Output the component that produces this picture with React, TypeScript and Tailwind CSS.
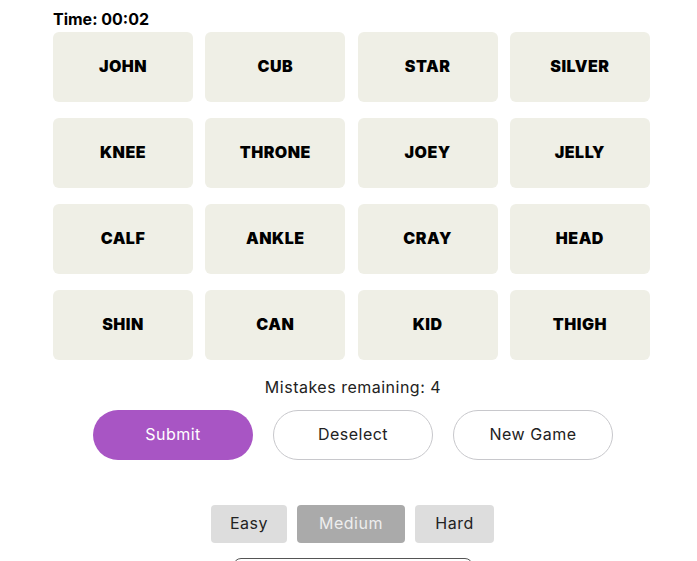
import React from "react";

const words = [
  "JOHN", "CUB", "STAR", "SILVER",
  "KNEE", "THRONE", "JOEY", "JELLY",
  "CALF", "ANKLE", "CRAY", "HEAD",
  "SHIN", "CAN", "KID", "THIGH",
];

export default function App() {
  return (
    <div className="w-[697px] h-[561px] overflow-hidden bg-white text-black" style={{ fontFamily: "Inter, 'Noto Sans', sans-serif" }}>
      <div className="pl-[53px] pt-[9px]">
        <div className="text-[16px] font-bold leading-[20px] tracking-[0px]">Time: 00:02</div>
        <div className="mt-[3px] grid grid-cols-[140px_140px_140px_140px] gap-x-[12.3px] gap-y-[16px]">
          {words.map((w) => (
            <div key={w} className="h-[70px] pb-[2px] rounded-[6px] bg-[#efefe6] flex items-center justify-center text-[16px] font-black tracking-[0.5px]">
              {w}
            </div>
          ))}
        </div>
      </div>
      <div className="mt-[16px] text-center text-[16px] leading-[22px] text-[#222] pl-[9px] tracking-[0.5px]">Mistakes remaining: 4</div>
      <div className="mt-[12px] flex justify-center gap-[20px] pl-[9px] tracking-[0.5px]">
        <button className="w-[160px] h-[50px] pb-[2px] rounded-full bg-[#a855c4] text-white text-[16px]">Submit</button>
        <button className="w-[160px] h-[50px] pb-[2px] rounded-full border border-[#c8c8cc] bg-white text-[#222] text-[16px]">Deselect</button>
        <button className="w-[160px] h-[50px] pb-[2px] rounded-full border border-[#c8c8cc] bg-white text-[#222] text-[16px]">New Game</button>
      </div>
      <div className="mt-[45px] flex justify-center gap-[10px] pl-[8px] tracking-[0.5px]">
        <button className="w-[76px] h-[38px] pb-[2px] rounded-[4px] bg-[#dddddd] text-[#222] text-[16px]">Easy</button>
        <button className="w-[108px] h-[38px] pb-[2px] rounded-[4px] bg-[#aaaaaa] text-[#eeeeee] text-[16px]">Medium</button>
        <button className="w-[79px] h-[38px] pb-[2px] rounded-[4px] bg-[#dddddd] text-[#222] text-[16px]">Hard</button>
      </div>
      <div className="mt-[15px] flex justify-center pl-[8px]">
        <div className="w-[240px] h-[40px] rounded-[8px] border border-[#555]"></div>
      </div>
    </div>
  );
}
